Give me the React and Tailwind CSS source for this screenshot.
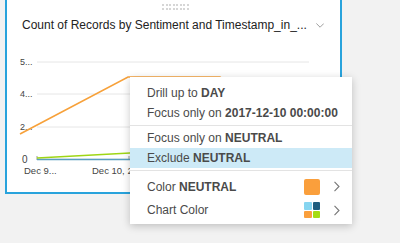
import React from "react";

const font = { fontFamily: '"Liberation Sans", Arial, sans-serif' };

const MenuRow = ({ children, active }) => (
  <div
    className={`flex items-center pl-[17px] pr-[12px] h-[20px] text-[12px] text-[#4a4a4a] whitespace-nowrap ${
      active ? "bg-[#cdeaf7]" : ""
    }`}
  >
    <span>{children}</span>
  </div>
);

const Chevron = () => (
  <svg width="6" height="11" viewBox="0 0 6 11" className="ml-[14px]">
    <path d="M0.5 0.8 L5 5.5 L0.5 10.2" fill="none" stroke="#777" strokeWidth="1.1" />
  </svg>
);

const Chart = () => (
  <svg width="335" height="140" className="block">
    <g transform="translate(-7,-48)" fontSize="9" fill="#444" style={font}>
      {[61, 93, 126, 158].map((y) => (
        <line key={y} x1="37" x2="309" y1={y} y2={y} stroke="#e6e6e6" strokeWidth="1" />
      ))}
      <text x="20" y="64">5...</text>
      <text x="20" y="96">4...</text>
      <text x="20" y="129">2...</text>
      <text x="22" y="162" fontSize="10">0</text>
      <line x1="37" x2="37" y1="155" y2="159" stroke="#999" />
      <line x1="129" x2="129" y1="155" y2="159" stroke="#999" />
      <line x1="37" x2="309" y1="158.5" y2="158.5" stroke="#5a9fc0" strokeWidth="1.5" />
      <polyline points="37,157 130,152 220,150" fill="none" stroke="#9fd615" strokeWidth="1.6" />
      <polyline points="20,133 128,76 220,76 240,90" fill="none" stroke="#f7a13a" strokeWidth="1.6" />
      <text x="24" y="173" fontSize="9.5">Dec 9...</text>
      <text x="92" y="173" fontSize="9.5">Dec 10, 20...</text>
    </g>
  </svg>
);

export default function App() {
  return (
    <div className="relative w-[400px] h-[243px] overflow-hidden bg-[#f2f2f2]" style={font}>
      <div className="ml-[5px] w-[337px] h-[194px] bg-white border-x-2 border-b-2 border-[#29a3dc] flex flex-col">
        <div className="flex pt-[4px] pl-[155px]">
          <div className="grid grid-cols-8 gap-x-[1.5px] gap-y-[2px]">
            {Array.from({ length: 16 }).map((_, i) => (
              <div key={i} className="w-[2px] h-[2px] rounded-full bg-[#c8c8c8]" />
            ))}
          </div>
        </div>
        <div className="flex items-center pl-[15px] pr-[16px] mt-[6px] h-[18px]">
          <span className="text-[12px] text-[#222] whitespace-nowrap">
            Count of Records by Sentiment and Timestamp_in_...
          </span>
          <svg width="11" height="7" viewBox="0 0 11 7" className="ml-[9px] mt-[1px]">
            <path d="M0.5 0.8 L5.5 5.8 L10.5 0.8" fill="none" stroke="#888" strokeWidth="1.1" />
          </svg>
        </div>
        <div className="mt-[15px]">
          <Chart />
        </div>
      </div>

      <div className="absolute left-[130px] top-[77px] w-[222px] bg-white shadow-[0_2px_8px_rgba(0,0,0,0.22)] pt-[6px] pb-[2px]">
        <MenuRow>
          Drill up to <b>DAY</b>
        </MenuRow>
        <MenuRow>
          Focus only on <b>2017-12-10 00:00:00</b>
        </MenuRow>
        <div className="h-px bg-[#e3e3e3] my-[2px]" />
        <MenuRow>
          Focus only on <b>NEUTRAL</b>
        </MenuRow>
        <MenuRow active>
          Exclude <b>NEUTRAL</b>
        </MenuRow>
        <div className="h-px bg-[#e3e3e3] mt-[2px] mb-[4px]" />
        <div className="flex items-center justify-between pl-[17px] pr-[12px] h-[23px] text-[12px] text-[#4a4a4a]">
          <span>
            Color <b>NEUTRAL</b>
          </span>
          <div className="flex items-center">
            <div className="w-[16px] h-[16px] rounded-[2px] bg-[#fa9f3c]" />
            <Chevron />
          </div>
        </div>
        <div className="flex items-center justify-between pl-[17px] pr-[12px] h-[24px] text-[12px] text-[#4a4a4a]">
          <span>Chart Color</span>
          <div className="flex items-center">
            <div className="grid grid-cols-2 gap-[1px] w-[16px] h-[16px]">
              <div className="bg-[#86d5f0] rounded-[1px]" />
              <div className="bg-[#1f5d7e] rounded-[1px]" />
              <div className="bg-[#fa9f3c] rounded-[1px]" />
              <div className="bg-[#a5dc12] rounded-[1px]" />
            </div>
            <Chevron />
          </div>
        </div>
      </div>
    </div>
  );
}
